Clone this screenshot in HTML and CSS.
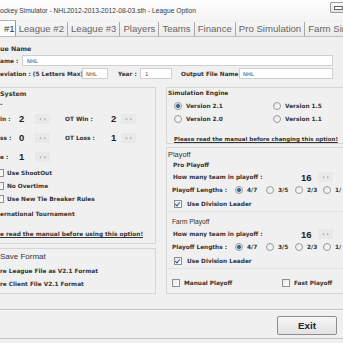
FILE: index.html
```html
<!DOCTYPE html>
<html lang="en">
<head>
  <meta charset="UTF-8" />
  <title>League Option</title>
  <link rel="stylesheet" href="styles.css">
</head>
<body>

  <div class="titlebar">
    <span class="title">ockey Simulator - NHL2012-2013-2012-08-03.sth - League Option</span>
    <span class="min-btn"></span>
  </div>

  <div class="tabs">
    <span class="tab active">#1</span>
    <span class="tab">League #2</span>
    <span class="tab">League #3</span>
    <span class="tab">Players</span>
    <span class="tab">Teams</span>
    <span class="tab">Finance</span>
    <span class="tab">Pro Simulation</span>
    <span class="tab">Farm Sim</span>
  </div>

  <div class="page">
    <div class="league">
      <div class="gtitle">ue Name</div>
      <div class="name-row">
        <span class="lbl name-lbl">ame :</span>
        <span class="field wide">NHL</span>
      </div>
      <div class="name-row">
        <span class="lbl abbr-lbl">eviation : (5 Letters Max)</span>
        <span class="field abbr">NHL</span>
        <span class="lbl year-lbl">Year :</span>
        <span class="field year">1</span>
        <span class="lbl out-lbl">Output File Name :</span>
        <span class="field out">NHL</span>
      </div>
    </div>

    <div class="cols">
      <div class="col">
        <div class="group system">
          <div class="gtitle">System</div>
          <div class="dash">-</div>
          <div class="spin-row">
            <span class="lbl">in :</span><span class="val">2</span><span class="spin">&lsaquo; &rsaquo;</span>
            <span class="lbl">OT Win :</span><span class="val">2</span><span class="spin">&lsaquo; &rsaquo;</span>
          </div>
          <div class="spin-row">
            <span class="lbl">ss :</span><span class="val">0</span><span class="spin">&lsaquo; &rsaquo;</span>
            <span class="lbl">OT Loss :</span><span class="val">1</span><span class="spin">&lsaquo; &rsaquo;</span>
          </div>
          <div class="spin-row">
            <span class="lbl">e :</span><span class="val">1</span><span class="spin">&lsaquo; &rsaquo;</span>
          </div>
          <div class="check-row cut"><span class="box"></span><span class="lbl">Use ShootOut</span></div>
          <div class="check-row cut"><span class="box"></span><span class="lbl">No Overtime</span></div>
          <div class="check-row cut"><span class="box"></span><span class="lbl">Use New Tie Breaker Rules</span></div>
          <div class="plain-row">ernational Tournament</div>
          <div class="link-row"><span class="link">e read the manual before using this option!</span></div>
        </div>

        <div class="group save">
          <div class="save-title">Save Format</div>
          <div class="check-row"><span class="lbl">re League File as V2.1 Format</span></div>
          <div class="check-row"><span class="lbl">re Client File V2.1 Format</span></div>
        </div>
      </div>

      <div class="col">
        <div class="group engine">
          <div class="gtitle">Simulation Engine</div>
          <div class="radio-grid">
            <span class="opt"><span class="radio on"></span><span class="lbl">Version 2.1</span></span>
            <span class="opt"><span class="radio"></span><span class="lbl">Version 1.5</span></span>
            <span class="opt"><span class="radio"></span><span class="lbl">Version 2.0</span></span>
            <span class="opt"><span class="radio"></span><span class="lbl">Version 1.1</span></span>
          </div>
          <div class="link-row engine-link"><span class="link">Please read the manual before changing this option!</span></div>
        </div>

        <div class="group playoff">
          <div class="playoff-title">Playoff</div>

          <div class="sub">
            <div class="sub-title bold">Pro Playoff</div>
            <div class="team-row">
              <span class="lbl">How many team in playoff :</span>
              <span class="val">16</span>
              <span class="spin">&lsaquo; &rsaquo;</span>
            </div>
            <div class="len-row">
              <span class="lbl">Playoff Lengths :</span>
              <span class="opt"><span class="radio on"></span><span class="lbl">4/7</span></span>
              <span class="opt"><span class="radio"></span><span class="lbl">3/5</span></span>
              <span class="opt"><span class="radio"></span><span class="lbl">2/3</span></span>
              <span class="opt"><span class="radio"></span><span class="lbl">1/</span></span>
            </div>
            <div class="check-row div-row"><span class="box on"></span><span class="lbl">Use Division Leader</span></div>
          </div>

          <div class="sub farm">
            <div class="sub-title">Farm Playoff</div>
            <div class="team-row">
              <span class="lbl">How many team in playoff :</span>
              <span class="val">16</span>
              <span class="spin">&lsaquo; &rsaquo;</span>
            </div>
            <div class="len-row">
              <span class="lbl">Playoff Lengths :</span>
              <span class="opt"><span class="radio on"></span><span class="lbl">4/7</span></span>
              <span class="opt"><span class="radio"></span><span class="lbl">3/5</span></span>
              <span class="opt"><span class="radio"></span><span class="lbl">2/3</span></span>
              <span class="opt"><span class="radio"></span><span class="lbl">1/</span></span>
            </div>
            <div class="check-row div-row"><span class="box on"></span><span class="lbl">Use Division Leader</span></div>
          </div>

          <div class="manual-row">
            <span class="opt"><span class="box"></span><span class="lbl">Manual Playoff</span></span>
            <span class="opt"><span class="box"></span><span class="lbl">Fast Playoff</span></span>
          </div>
        </div>
      </div>
    </div>

    <div class="footer">
      <button type="button" class="exit">Exit</button>
    </div>
  </div>

</body>
</html>
```

FILE: styles.css
```css
body {
  margin: 0;
  width: 343px;
  height: 343px;
  overflow: hidden;
  background-color: #f0f0f0;
  font-family: "DejaVu Sans", Verdana, sans-serif;
  color: #333;
}

/* Window title bar */
.titlebar {
  height: 20px;
  display: flex;
  align-items: center;
  background: linear-gradient(#fdfdfd, #f5f5f5);
}
.title {
  font-family: "Liberation Sans", Arial, sans-serif;
  font-size: 6.7px;
  color: #3a3a3a;
  white-space: nowrap;
}
.min-btn {
  margin-left: auto;
  align-self: flex-start;
  margin-top: 2px;
  width: 13px;
  height: 11px;
  border: 1px solid #9a9a9a;
  border-right: none;
  border-radius: 2px 0 0 2px;
  background: linear-gradient(#fafafa, #e4e4e4);
  display: flex;
  align-items: center;
  padding-left: 3px;
  box-sizing: border-box;
}
.min-btn::after {
  content: "";
  width: 7px;
  height: 2px;
  border: 1px solid #666;
  background: #fff;
}

/* Tabs */
.tabs {
  height: 17px;
  display: flex;
  align-items: flex-end;
  border-bottom: 1px solid #bdbdbd;
  box-sizing: border-box;
  font-family: "Liberation Sans", Arial, sans-serif;
  font-size: 9.6px;
  color: #666;
  white-space: nowrap;
}
.tab {
  height: 14px;
  line-height: 14px;
  padding: 0 3px;
  border-left: 1px solid #a9a9a9;
  background: linear-gradient(#f6f6f6, #ebebeb);
}
.tab.active {
  height: 16px;
  line-height: 15px;
  width: 19px;
  padding: 0 0 0 4px;
  box-sizing: border-box;
  border-left: none;
  border-right: 1px solid #999;
  border-top: 1px solid #b5b5b5;
  background: #fcfcfc;
  color: #333;
}
.tab.active + .tab {
  border-left: none;
}

/* Shared text */
.lbl {
  font-weight: bold;
  font-size: 5.8px;
  white-space: nowrap;
}
.gtitle {
  font-weight: bold;
  font-size: 6.3px;
  height: 11px;
  line-height: 11px;
  white-space: nowrap;
}
.val {
  font-family: "Liberation Sans", Arial, sans-serif;
  font-weight: bold;
  font-size: 9.5px;
  color: #222;
}
.spin {
  width: 15px;
  height: 10px;
  line-height: 10px;
  text-align: center;
  font-size: 6px;
  color: #555;
  background: #e9e9e9;
}
.link {
  font-weight: bold;
  font-size: 5.8px;
  text-decoration: underline;
  white-space: nowrap;
}

/* League name block */
.league {
  height: 50px;
  padding-top: 6px;
  box-sizing: border-box;
}
.name-row {
  height: 13px;
  display: flex;
  align-items: center;
}
.field {
  height: 11px;
  line-height: 11px;
  box-sizing: border-box;
  border: 1px solid #cfcfcf;
  background: #fff;
  font-size: 5.3px;
  color: #444;
  padding-left: 3px;
}
.name-lbl { width: 22px; }
.wide { width: 311px; padding-left: 4px; }
.abbr-lbl { width: 82px; }
.abbr { width: 26px; }
.year-lbl { margin-left: 10px; width: 22px; }
.year { width: 32px; padding-left: 4px; }
.out-lbl { margin-left: 9px; width: 58px; }
.out { width: 94px; }

/* Two columns of group boxes */
.cols {
  display: grid;
  grid-template-columns: 156px 177px;
  column-gap: 10px;
}
.group {
  border: 1px solid #d6d6d6;
  box-sizing: border-box;
}
.col:first-child .group {
  border-left: none;
}
.col:last-child .group {
  border-right: none;
  padding-left: 1px;
}

.system {
  height: 157px;
}
.dash {
  height: 10px;
  line-height: 10px;
  font-size: 6px;
  font-weight: bold;
}
.spin-row {
  height: 19px;
  display: grid;
  grid-template-columns: 19px 16px 15px 60px 11px 15px;
  align-items: center;
}
.spin-row .lbl:nth-child(4) {
  padding-left: 15px;
}
.spin-row .val:nth-child(5) {
  padding-left: 1px;
}
.check-row {
  height: 13px;
  display: flex;
  align-items: center;
  gap: 3px;
}
.check-row.cut .box {
  margin-left: -4px;
}
.plain-row {
  height: 19px;
  line-height: 19px;
  font-size: 5.8px;
  font-weight: bold;
}
.link-row {
  height: 14px;
  line-height: 14px;
}

.save {
  margin-top: 4px;
  height: 46px;
}
.save-title {
  font-family: "Liberation Sans", Arial, sans-serif;
  font-size: 8px;
  height: 15px;
  line-height: 16px;
}

/* Checkboxes and radio buttons */
.box {
  width: 6px;
  height: 6px;
  border: 1px solid #8f8f8f;
  background: linear-gradient(135deg, #e8e8e8, #ffffff);
  flex: none;
  position: relative;
}
.box.on::after {
  content: "";
  position: absolute;
  left: 1px;
  top: 0;
  width: 2px;
  height: 4px;
  border: solid #2c5a9a;
  border-width: 0 1.3px 1.3px 0;
  transform: rotate(40deg);
}
.radio {
  width: 6px;
  height: 6px;
  border: 1px solid #9a9a9a;
  border-radius: 50%;
  background: linear-gradient(135deg, #e6e6e6, #fdfdfd);
  flex: none;
}
.radio.on {
  background: radial-gradient(circle, #3d6a95 0 1.6px, #c8d6e4 2.2px, #f2f2f2 3px);
}
.opt {
  display: flex;
  align-items: center;
  gap: 4px;
}

/* Simulation engine */
.engine {
  height: 57px;
}
.engine .gtitle {
  font-size: 5.9px;
}
.radio-grid {
  display: grid;
  grid-template-columns: 99px 70px;
  grid-auto-rows: 13px;
  align-items: center;
  padding-left: 6px;
}
.engine-link {
  margin-top: 4px;
  padding-left: 6px;
}
.engine-link .link {
  font-size: 5.5px;
}

/* Playoff */
.playoff {
  margin-top: 3px;
  height: 147px;
}
.playoff-title {
  font-family: "Liberation Sans", Arial, sans-serif;
  font-size: 7.4px;
  height: 12px;
  line-height: 13px;
}
.sub {
  padding-left: 5px;
  border-bottom: 1px solid #e2e2e2;
}
.sub-title {
  font-size: 5.9px;
  height: 11px;
  line-height: 11px;
}
.sub-title.bold {
  font-weight: bold;
}
.farm {
  padding-top: 3px;
}
.farm .sub-title {
  font-family: "Liberation Sans", Arial, sans-serif;
  font-size: 6.6px;
  height: 13px;
  line-height: 13px;
  margin-left: -1px;
}
.team-row {
  height: 12px;
  display: grid;
  grid-template-columns: 128px 17px 15px;
  align-items: center;
}
.len-row {
  height: 14px;
  display: grid;
  grid-template-columns: 63px 31px 29px 28px 20px;
  align-items: center;
  margin-left: -1px;
}
.div-row {
  height: 14px;
  padding-left: 1px;
  gap: 5px;
}
.manual-row {
  margin-top: 7px;
  height: 14px;
  display: grid;
  grid-template-columns: 110px 60px;
  align-items: center;
  padding-left: 4px;
}

/* Bottom bar */
.footer {
  margin-top: 15px;
  height: 30px;
  border-top: 1px solid #c4c4c4;
  border-bottom: 1px solid #c4c4c4;
  box-shadow: inset 0 1px 0 #fafafa;
  display: flex;
  justify-content: flex-end;
  align-items: flex-start;
  padding-top: 6px;
  box-sizing: border-box;
}
.exit {
  width: 60px;
  height: 19px;
  margin-right: 6px;
  border: 1px solid #8d8d8d;
  border-radius: 2px;
  background: linear-gradient(#f6f6f6, #e2e2e2);
  font-family: "Liberation Sans", Arial, sans-serif;
  font-weight: bold;
  font-size: 9.8px;
  color: #222;
  padding: 0;
}
```
